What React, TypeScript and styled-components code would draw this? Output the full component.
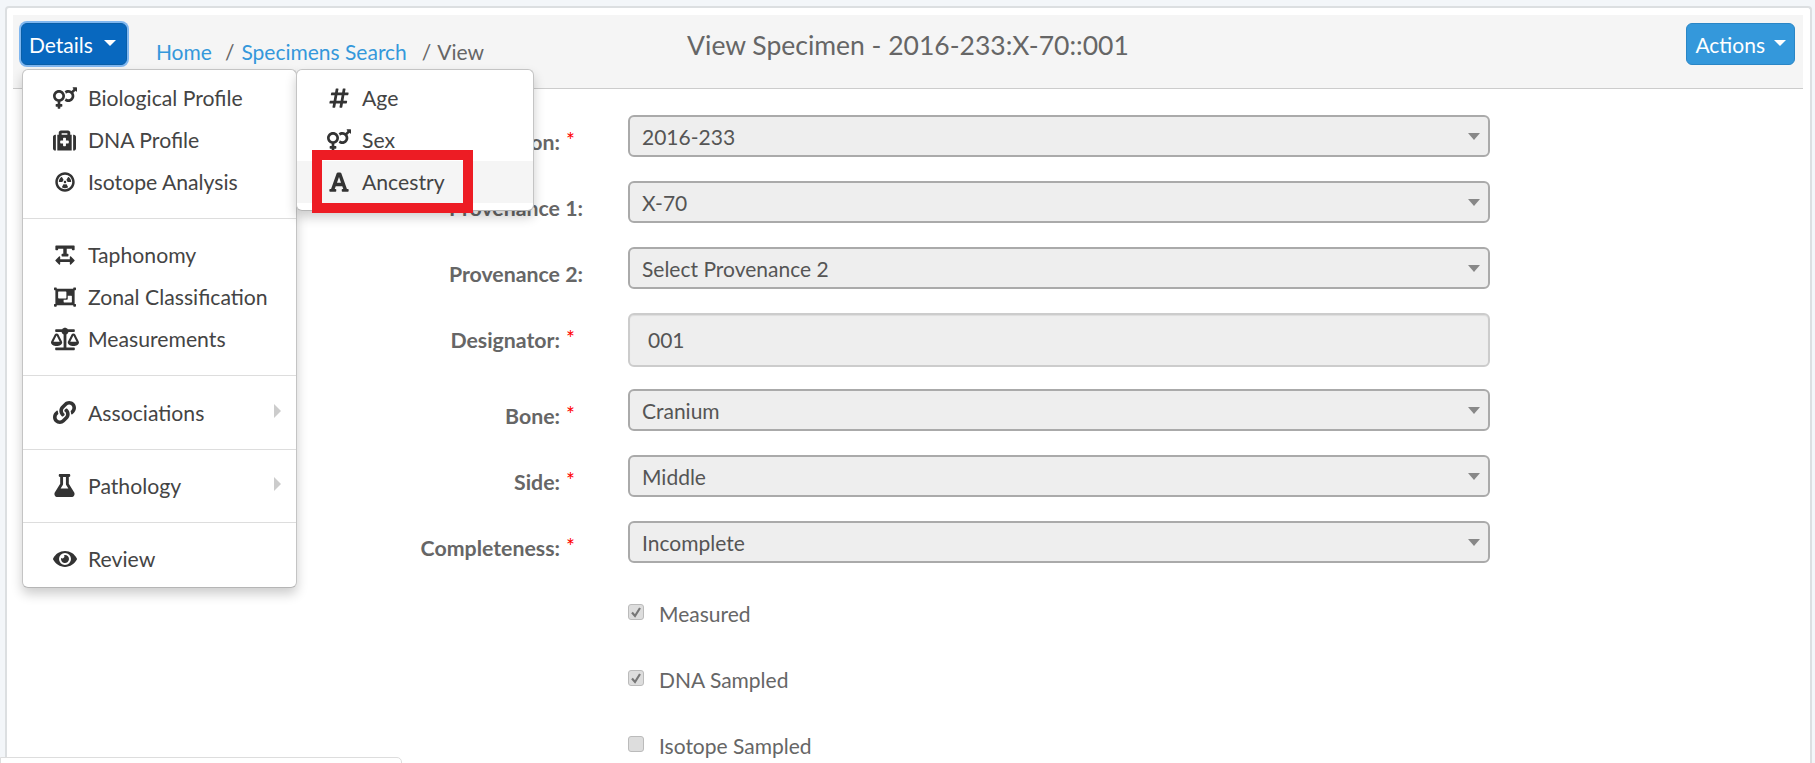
import React from "react";
import styled, { createGlobalStyle } from "styled-components";
import {
  FaVenusMars, FaMedkit, FaRadiationAlt, FaTextWidth, FaObjectGroup, FaBalanceScale,
  FaLink, FaFlask, FaEye, FaHashtag, FaFont,
} from "react-icons/fa";

const Global = createGlobalStyle`
  html, body { margin: 0; height: 100%; overflow: hidden; background: #f3f6f9; }
  body { font-family: Lato, "Open Sans", sans-serif; font-size: 21px; color: #555; }
`;

const Page = styled.div`
  padding: 6px 3px 0 5px;
  height: 763px;
  box-sizing: border-box;
  overflow: hidden;
  position: relative;
`;
const Card = styled.div`
  position: relative;
  background: #fff;
  border: 2px solid #dcdfe1;
  border-bottom: none;
  border-radius: 4px 4px 0 0;
  height: 780px;
  padding: 7px 7px 0 6px;
  box-sizing: border-box;
`;
const Bar = styled.header`
  display: flex;
  align-items: flex-start;
  height: 74px;
  box-sizing: border-box;
  padding: 8px 8px 0 8px;
  background: #f5f5f5;
  border-bottom: 1px solid #ccc;
`;
const DropButton = styled.button<{ $focus?: boolean }>`
  display: inline-flex;
  align-items: center;
  gap: ${(p) => (p.$focus ? 11 : 9)}px;
  height: 42px;
  padding: ${(p) => (p.$focus ? "0 10px 0 7px" : "0 8px")};
  font: 400 21px Lato, sans-serif;
  color: #fff;
  border-radius: 6px;
  background: ${(p) => (p.$focus ? "#0868bf" : "#3498db")};
  border: 1px solid ${(p) => (p.$focus ? "#0a5fa8" : "#2a86c6")};
  box-shadow: ${(p) => (p.$focus ? "0 0 0 2px #80b7f0" : "none")};
`;
const Caret = styled.span`
  width: 0;
  height: 0;
  border-left: 6px solid transparent;
  border-right: 6px solid transparent;
  border-top: 6px solid #fff;
  margin-top: -3px;
`;
const Crumbs = styled.nav`
  display: flex;
  margin: 15px 0 0 29px;
  line-height: 28px;
  color: #666;
`;
const CrumbLink = styled.a`
  color: #3498db;
`;
const CrumbSep = styled.span<{ $l: number; $r: number }>`
  margin: 0 ${(p) => p.$r}px 0 ${(p) => p.$l}px;
`;
const Title = styled.h1`
  margin: 8px 0 0 203px;
  font: 400 26.5px/28px Lato, sans-serif;
  color: #666;
`;
const RightAction = styled.div`
  margin-left: auto;
`;

const Menu = styled.div<{ $left: number; $width: number }>`
  position: absolute;
  left: ${(p) => p.$left}px;
  top: 61px;
  width: ${(p) => p.$width}px;
  box-sizing: border-box;
  padding: 7px 0;
  background: #fff;
  border: 1px solid #c4c4c4;
  border-bottom-color: #b5b5b5;
  border-radius: 6px;
  box-shadow: 0 6px 12px rgba(0, 0, 0, 0.2);
  z-index: 2;
`;
const Item = styled.div<{ $active?: boolean; $iconLeft: number }>`
  position: relative;
  display: flex;
  align-items: center;
  height: 42px;
  box-sizing: border-box;
  padding: 0 0 0 ${(p) => p.$iconLeft}px;
  font-size: 21.2px;
  color: #444;
  background: ${(p) => (p.$active ? "#f5f5f5" : "transparent")};
`;
const IconSlot = styled.span<{ $size: number }>`
  display: flex;
  justify-content: center;
  align-items: center;
  width: 29px;
  margin-right: 9px;
  color: #333;
  font-size: ${(p) => p.$size}px;
`;
const Divider = styled.div`
  height: 1px;
  background: #ddd;
  margin: 15px 0 15.3px;
`;
const SubArrow = styled.span`
  position: absolute;
  right: 15px;
  top: 12px;
  width: 0;
  height: 0;
  border-top: 7px solid transparent;
  border-bottom: 7px solid transparent;
  border-left: 7px solid #ccc;
`;
const Callout = styled.div`
  position: absolute;
  left: 305px;
  top: 142px;
  width: 161px;
  height: 63px;
  box-sizing: border-box;
  border: 10px solid #ed1c24;
  z-index: 3;
`;

const Form = styled.form`
  padding-top: 26px;
  display: flex;
  flex-direction: column;
`;
const Row = styled.div<{ $tall?: boolean }>`
  display: grid;
  grid-template-columns: 570px 862px;
  column-gap: 45px;
  height: ${(p) => (p.$tall ? 76 : 66)}px;
`;
const Label = styled.label`
  padding-top: 13px;
  font-weight: 700;
  font-size: 21.3px;
  line-height: 28px;
  color: #666;
  text-align: right;
`;
const Star = styled.span`
  display: inline-block;
  color: #f00;
  font-weight: 400;
  font-size: 21px;
  width: 15px;
  margin-right: 8px;
  text-align: right;
  position: relative;
  top: -2px;
`;
const Select = styled.div`
  position: relative;
  height: 42px;
  box-sizing: border-box;
  display: flex;
  align-items: center;
  padding: 0 12px;
  background: #eee;
  border: 2px solid #aaa;
  border-radius: 6px;
  color: #555;
  font-size: 21px;
`;
const SelectCaret = styled.span`
  position: absolute;
  right: 8px;
  top: 16px;
  width: 0;
  height: 0;
  border-left: 6px solid transparent;
  border-right: 6px solid transparent;
  border-top: 7px solid #888;
`;
const TextBox = styled.input`
  height: 54px;
  width: 100%;
  box-sizing: border-box;
  padding: 0 18px 2px;
  background: #eee;
  border: 2px solid #ccc;
  border-radius: 6px;
  box-shadow: inset 0 1px 1px rgba(0, 0, 0, 0.075);
  font: 400 21px Lato, sans-serif;
  color: #555;
`;
const CheckRow = styled.div`
  display: flex;
  align-items: center;
  height: 66px;
  margin-left: 615px;
  gap: 15px;
  color: #666;
  font-size: 21px;
`;
const CheckBox = styled.span`
  display: flex;
  align-items: center;
  justify-content: center;
  width: 16px;
  height: 16px;
  border: 1px solid #bbb;
  border-radius: 3px;
  background: #ddd;
  margin-top: -2px;
  box-sizing: border-box;
  color: #777;
`;
const Checks = styled.div`
  margin-top: -7px;
`;
const Corner = styled.div`
  position: absolute;
  left: 0;
  bottom: -10px;
  width: 400px;
  height: 14px;
  background: #fff;
  border: 1px solid #ddd;
  border-radius: 0 5px 0 0;
  z-index: 4;
`;

const main1 = [
  [FaVenusMars, "Biological Profile", 24],
  [FaMedkit, "DNA Profile", 23],
  [FaRadiationAlt, "Isotope Analysis", 20],
] as const;

const MainItem = ({ icon: I, text, sub, size = 21 }: { icon: any; text: string; sub?: boolean; size?: number }) => (
  <Item $iconLeft={27}>
    <IconSlot $size={size}><I /></IconSlot>
    {text}
    {sub && <SubArrow />}
  </Item>
);
const SubItem = ({ icon: I, text, active, size = 22 }: { icon: any; text: string; active?: boolean; size?: number }) => (
  <Item $iconLeft={27} $active={active}>
    <IconSlot $size={size}><I /></IconSlot>
    {text}
  </Item>
);
const FormSelect = ({ label, value, req }: { label: string; value: string; req?: boolean }) => (
  <Row>
    <Label>
      {label}
      {req && <Star>*</Star>}
    </Label>
    <Select>
      {value}
      <SelectCaret />
    </Select>
  </Row>
);
const Check = ({ label, on }: { label: string; on?: boolean }) => (
  <CheckRow>
    <CheckBox>
      {on && (
        <svg width="12" height="12" viewBox="0 0 12 12">
          <path d="M2 6.5 L5 10 L10 2" fill="none" stroke="currentColor" strokeWidth="2.2" />
        </svg>
      )}
    </CheckBox>
    {label}
  </CheckRow>
);

export default function App() {
  return (
    <Page>
      <Global />
      <Card>
        <Bar>
          <DropButton $focus>
            Details <Caret />
          </DropButton>
          <Crumbs>
            <CrumbLink>Home</CrumbLink>
            <CrumbSep $l={13} $r={7}>/</CrumbSep>
            <CrumbLink>Specimens Search</CrumbLink>
            <CrumbSep $l={15} $r={6}>/</CrumbSep>
            <span>View</span>
          </Crumbs>
          <Title>View Specimen - 2016-233:X-70::001</Title>
          <RightAction>
            <DropButton>
              Actions <Caret />
            </DropButton>
          </RightAction>
        </Bar>

        <Menu $left={15} $width={275}>
          {main1.map(([i, t, s]) => <MainItem key={t} icon={i} text={t} size={s} />)}
          <Divider />
          <MainItem icon={FaTextWidth} text="Taphonomy" size={22} />
          <MainItem icon={FaObjectGroup} text="Zonal Classification" size={22} />
          <MainItem icon={FaBalanceScale} text="Measurements" size={28} />
          <Divider />
          <MainItem icon={FaLink} text="Associations" size={23} sub />
          <Divider />
          <MainItem icon={FaFlask} text="Pathology" size={23} sub />
          <Divider />
          <MainItem icon={FaEye} text="Review" size={24} />
        </Menu>
        <Menu $left={289} $width={238}>
          <SubItem icon={FaHashtag} text="Age" />
          <SubItem icon={FaVenusMars} text="Sex" size={24} />
          <SubItem icon={FaFont} text="Ancestry" active />
        </Menu>
        <Callout />

        <Form>
          <FormSelect label="Accession:" value="2016-233" req />
          <FormSelect label="Provenance 1:" value="X-70" />
          <FormSelect label="Provenance 2:" value="Select Provenance 2" />
          <Row $tall>
            <Label>Designator:<Star>*</Star></Label>
            <TextBox readOnly value="001" />
          </Row>
          <FormSelect label="Bone:" value="Cranium" req />
          <FormSelect label="Side:" value="Middle" req />
          <FormSelect label="Completeness:" value="Incomplete" req />
          <Checks>
            <Check label="Measured" on />
            <Check label="DNA Sampled" on />
            <Check label="Isotope Sampled" />
          </Checks>
        </Form>
      </Card>
      <Corner />
    </Page>
  );
}
